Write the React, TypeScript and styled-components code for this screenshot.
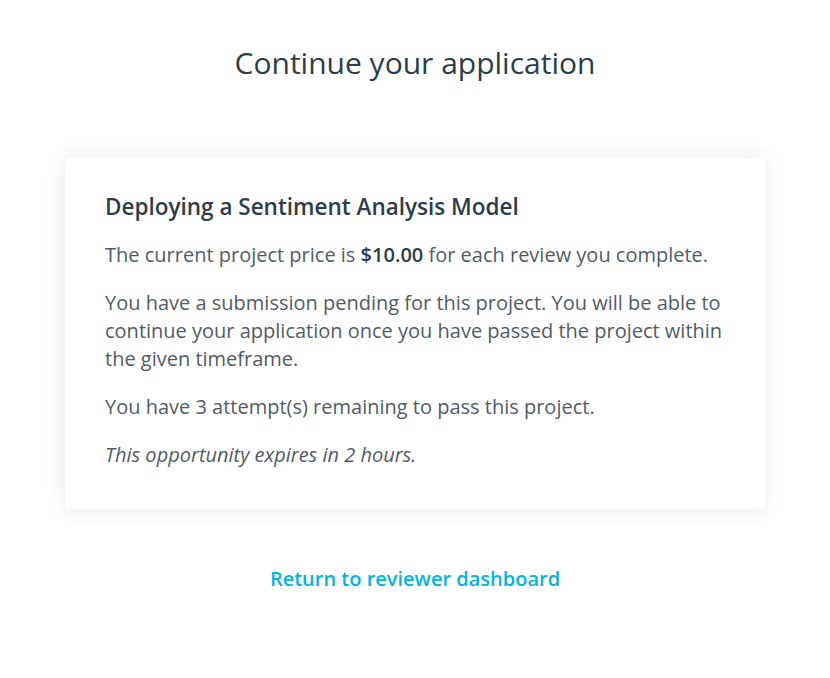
import React from "react";
import styled, { createGlobalStyle } from "styled-components";

const Global = createGlobalStyle`
  html, body { margin: 0; padding: 0; background: #ffffff; }
  body { font-family: "Open Sans", "Noto Sans", sans-serif; -webkit-font-smoothing: antialiased; }
`;

const Page = styled.main`
  width: 830px;
  display: flex;
  flex-direction: column;
  align-items: center;
  padding-top: 42px;
`;

const Title = styled.h1`
  margin: 0;
  font-size: 30px;
  line-height: 42px;
  font-weight: 400;
  color: #2e3d49;
`;

const Card = styled.section`
  box-sizing: border-box;
  width: 700px;
  margin-top: 74px;
  padding: 33px 40px 40px;
  background: #fff;
  border-radius: 4px;
  box-shadow: 0 0 20px rgba(46, 61, 73, 0.12);
`;

const CardTitle = styled.h2`
  margin: 0 0 18px;
  font-size: 22.5px;
  line-height: 32px;
  font-weight: 600;
  color: #2e3d49;
`;

const Para = styled.p<{ $italic?: boolean }>`
  margin: 0 0 20px;
  font-size: 20px;
  line-height: 28px;
  color: #525c65;
  font-style: ${(p) => (p.$italic ? "italic" : "normal")};
  &:last-child { margin-bottom: 0; }
  strong { font-weight: 600; color: #2e3d49; }
`;

const Link = styled.a`
  margin-top: 56px;
  font-size: 20px;
  line-height: 28px;
  font-weight: 600;
  color: #02b3e4;
  text-decoration: none;
`;

export default function App() {
  return (
    <>
      <Global />
      <Page>
        <Title>Continue your application</Title>
        <Card>
          <CardTitle>Deploying a Sentiment Analysis Model</CardTitle>
          <Para>
            The current project price is <strong>$10.00</strong> for each review you complete.
          </Para>
          <Para>
            You have a submission pending for this project. You will be able to continue your
            application once you have passed the project within the given timeframe.
          </Para>
          <Para>You have 3 attempt(s) remaining to pass this project.</Para>
          <Para $italic>This opportunity expires in 2 hours.</Para>
        </Card>
        <Link href="#">Return to reviewer dashboard</Link>
      </Page>
    </>
  );
}
